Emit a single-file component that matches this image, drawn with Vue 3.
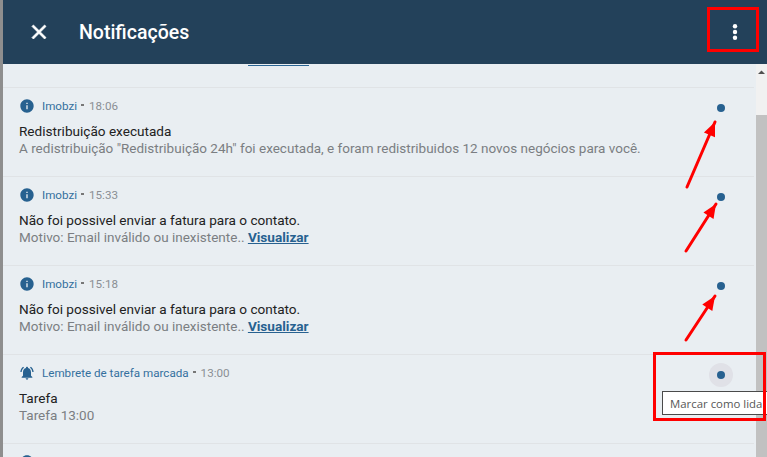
<script setup>
const info = 'M12 2C6.48 2 2 6.48 2 12s4.48 10 10 10 10-4.48 10-10S17.52 2 12 2zm1 15h-2v-6h2v6zm0-8h-2V7h2v2z'
const bell = 'M7.58 4.08L6.15 2.65C3.75 4.48 2.17 7.3 2.03 10.5h2c.15-2.65 1.51-4.97 3.55-6.42zm12.39 6.42h2c-.15-3.2-1.73-6.02-4.12-7.85l-1.42 1.43c2.02 1.45 3.39 3.77 3.54 6.42zM18 11c0-3.07-1.64-5.64-4.5-6.32V4c0-.83-.67-1.5-1.5-1.5s-1.5.67-1.5 1.5v.68C7.63 5.36 6 7.92 6 11v5l-2 2v1h16v-1l-2-2v-5zm-6 11c.14 0 .27-.01.4-.04.65-.14 1.18-.58 1.44-1.18.1-.24.15-.5.15-.78h-4c.01 1.1.9 2 2.01 2z'
const fatura = 'Não foi possivel enviar a fatura para o contato.'
const motivo = 'Motivo: Email inválido ou inexistente.. '
const rows = [
  { icon: info, source: 'Imobzi', time: '18:06', title: 'Redistribuição executada', body: 'A redistribuição "Redistribuição 24h" foi executada, e foram redistribuidos 12 novos negócios para você.' },
  { icon: info, source: 'Imobzi', time: '15:33', title: fatura, body: motivo, link: 'Visualizar' },
  { icon: info, source: 'Imobzi', time: '15:18', title: fatura, body: motivo, link: 'Visualizar' },
  { icon: bell, source: 'Lembrete de tarefa marcada', time: '13:00', title: 'Tarefa', body: 'Tarefa 13:00', hover: true },
  { icon: info, source: '', time: '', title: '', body: '' }
]
const arrows = [
  { x1: 687, y1: 187, x2: 715, y2: 122 },
  { x1: 686, y1: 251, x2: 716, y2: 204 },
  { x1: 686, y1: 340, x2: 715, y2: 296 }
]
const head = (a) => {
  const dx = a.x2 - a.x1, dy = a.y2 - a.y1, l = Math.hypot(dx, dy)
  const ux = dx / l, uy = dy / l
  const bx = a.x2 - ux * 14, by = a.y2 - uy * 14
  return `${a.x2},${a.y2} ${bx - uy * 6},${by + ux * 6} ${bx + uy * 6},${by - ux * 6}`
}
</script>

<template>
  <div class="page">
    <div class="backdrop"></div>
    <div class="panel">
      <header class="bar">
        <svg class="close" width="24" height="24" viewBox="0 0 24 24"><path d="M19 6.41L17.59 5 12 10.59 6.41 5 5 6.41 10.59 12 5 17.59 6.41 19 12 13.41 17.59 19 19 17.59 13.41 12z" /></svg>
        <h1 class="heading">Notificações</h1>
        <svg class="more" width="24" height="24" viewBox="0 0 24 24"><circle cx="12" cy="6.2" r="2.2" /><circle cx="12" cy="12" r="2.2" /><circle cx="12" cy="17.8" r="2.2" /></svg>
      </header>
      <div class="content">
        <div class="list">
          <div class="stub"><span class="stub-line"></span></div>
          <article v-for="(r, i) in rows" :key="i" class="row">
            <div class="text">
              <div class="meta">
                <svg class="kind" width="16" height="16" viewBox="0 0 24 24"><path :d="r.icon" /></svg>
                <span class="source">{{ r.source }}</span>
                <span v-if="r.time" class="sep"></span>
                <span class="time">{{ r.time }}</span>
              </div>
              <p class="title">{{ r.title }}</p>
              <p class="body">{{ r.body }}<a v-if="r.link" class="link">{{ r.link }}</a></p>
            </div>
            <div v-if="r.title" class="mark" :class="{ hover: r.hover }"><span class="dot"></span></div>
          </article>
        </div>
        <div class="scrollbar">
          <svg class="up" width="11" height="17" viewBox="0 0 11 17"><path d="M2 10h7L5.5 6.5z" /></svg>
          <div class="thumb"></div>
        </div>
      </div>
    </div>
    <div class="tooltip">Marcar como lida</div>
    <svg class="notes" width="767" height="457" viewBox="0 0 767 457">
      <rect x="708.5" y="8.5" width="49" height="42" />
      <rect x="654.5" y="353.5" width="110" height="66" />
      <g v-for="(a, i) in arrows" :key="i">
        <line :x1="a.x1" :y1="a.y1" :x2="a.x2" :y2="a.y2" />
        <polygon :points="head(a)" />
      </g>
    </svg>
  </div>
</template>

<style scoped>
.page {
  position: relative;
  display: flex;
  width: 767px;
  height: 457px;
  overflow: hidden;
  font-family: Roboto, "Liberation Sans", sans-serif;
}
.backdrop {
  flex: 0 0 3px;
  background: #8e8e8e;
}
.panel {
  flex: 1;
  display: flex;
  flex-direction: column;
  min-width: 0;
  background: #e9eef2;
}
.bar {
  flex: 0 0 64px;
  display: flex;
  align-items: center;
  padding: 0 20px 0 24px;
  background: #23415a;
  color: #fff;
}
.close, .more { fill: #fff; }
.close { stroke: #fff; stroke-width: 0.8; }
.heading {
  flex: 1;
  margin: 2px 0 0 28px;
  font-size: 19.5px;
  font-weight: 500;
  line-height: 24px;
}
.content {
  flex: 1;
  display: flex;
  min-height: 0;
}
.list {
  flex: 1;
  min-width: 0;
  overflow: hidden;
}
.stub {
  height: 23px;
  margin-right: 2px;
  padding-top: 1px;
  box-sizing: content-box;
  height: 22px;
  border-bottom: 1px solid #e0e3e6;
}
.stub-line {
  display: block;
  width: 61px;
  height: 1px;
  margin-left: 245px;
  background: #2a6595;
}
.row {
  display: flex;
  justify-content: space-between;
  height: 88px;
  margin-right: 2px;
  padding-left: 16px;
  border-bottom: 1px solid #e0e3e6;
}
.text { padding-top: 10px; }
.meta {
  display: flex;
  align-items: center;
  height: 16px;
  font-size: 11.64px;
  line-height: 16px;
  color: #8a8f94;
}
.kind {
  fill: #276190;
  margin-right: 7px;
}
.source { color: #34709e; }
.sep {
  width: 3px;
  height: 2px;
  margin: 0 5px 2px 4px;
  background: #777;
}
.title {
  margin: 9px 0 0;
  font-size: 13.58px;
  line-height: 17px;
  color: #222;
}
.body {
  margin: 0;
  font-size: 13.5px;
  line-height: 17px;
  color: #7b7e82;
}
.link {
  font-size: 13.6px;
  font-weight: 700;
  color: #276190;
  text-decoration: underline;
}
.mark {
  display: flex;
  align-items: center;
  justify-content: center;
  flex: 0 0 24px;
  width: 24px;
  height: 24px;
  margin: 8px 21px 0 0;
  border-radius: 50%;
}
.mark.hover { background: #e0e1e7; }
.dot {
  width: 8px;
  height: 8px;
  border-radius: 50%;
  background: #276190;
}
.scrollbar {
  position: relative;
  flex: 0 0 11px;
  background: #f1f1f1;
}
.up {
  display: block;
  fill: #505050;
}
.thumb {
  position: absolute;
  top: 51px;
  left: 0;
  right: 0;
  bottom: 0;
  background: #c1c1c1;
}
.tooltip {
  position: absolute;
  left: 662px;
  top: 391px;
  width: 110px;
  height: 24px;
  padding-left: 7px;
  box-sizing: border-box;
  border: 1px solid #4a4a4a;
  background: #fff;
  font-family: "Open Sans", sans-serif;
  font-size: 11.4px;
  line-height: 23px;
  color: #575757;
  white-space: nowrap;
}
.notes {
  position: absolute;
  left: 0;
  top: 0;
  pointer-events: none;
}
.notes rect {
  fill: none;
  stroke: #f00;
  stroke-width: 3;
}
.notes line {
  stroke: #f00;
  stroke-width: 3;
  stroke-linecap: round;
}
.notes polygon { fill: #f00; }
</style>
